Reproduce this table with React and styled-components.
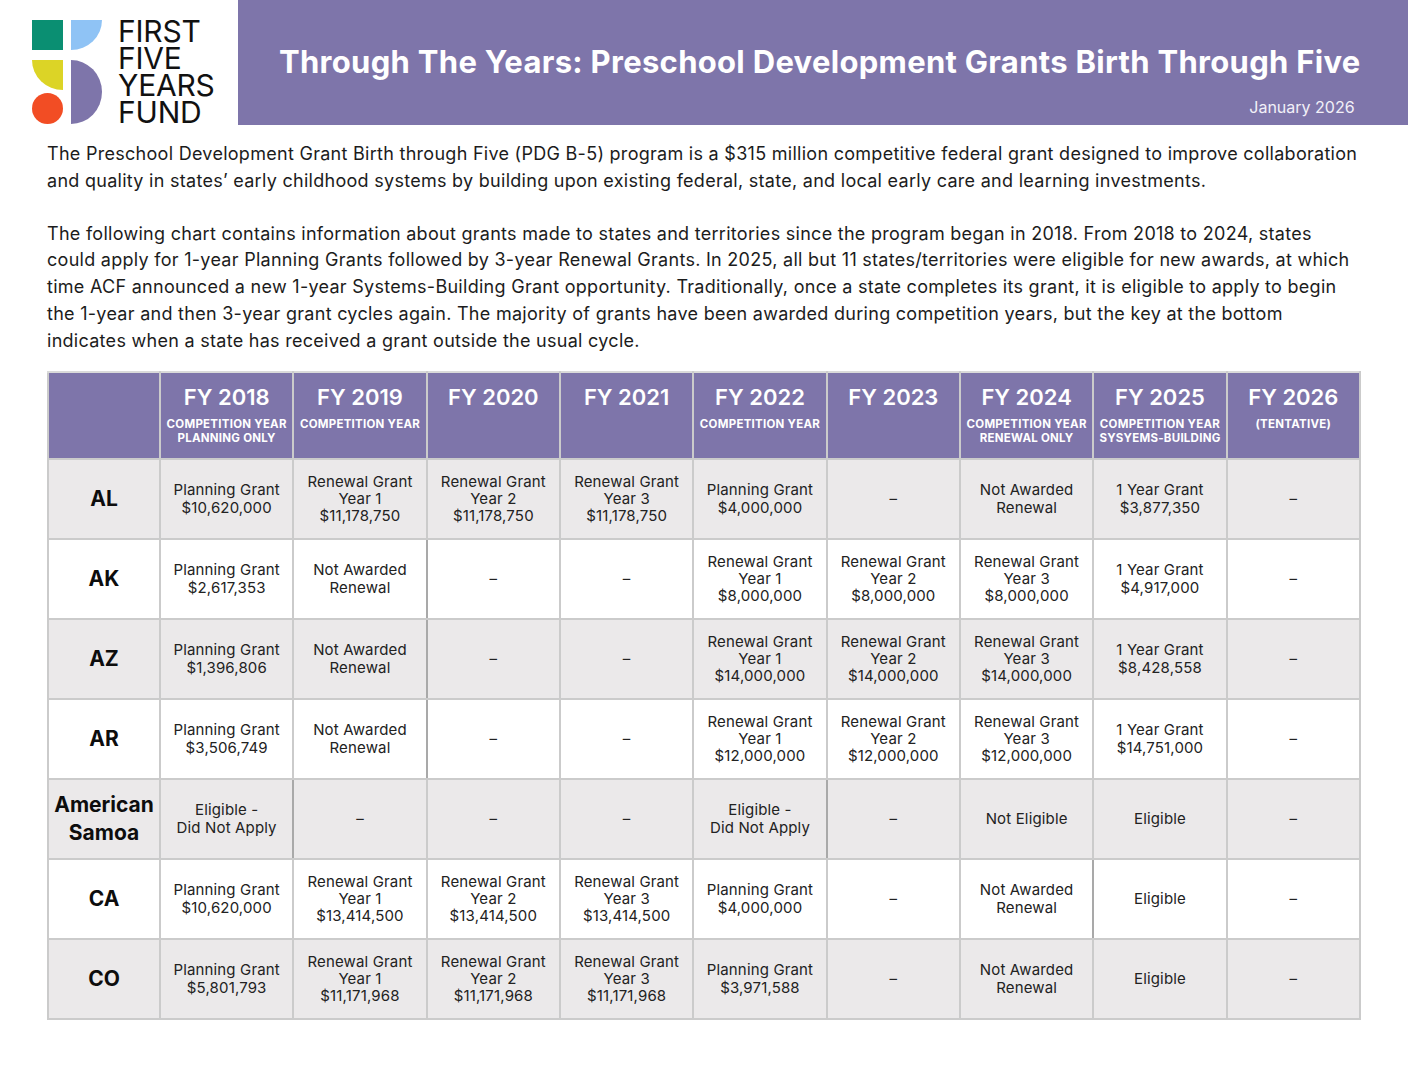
import styled, { createGlobalStyle } from "styled-components";

const PURPLE = "#7e75aa";
const GRID = "#cbcbcb";
const SHADE = "#ebe9ea";

const GlobalStyle = createGlobalStyle`
  body {
    margin: 0;
    background: #fff;
    font-family: "Inter", "Noto Sans", sans-serif;
    color: #1c1c1c;
  }
`;

const Page = styled.div`
  width: 1408px;
`;

const Header = styled.header`
  display: flex;
  height: 125px;
`;

const LogoBox = styled.div`
  width: 238px;
  flex-shrink: 0;
  display: flex;
  align-items: flex-start;
  gap: 16px;
  padding: 19px 0 0 32px;
  box-sizing: border-box;
`;

const LogoText = styled.div`
  font-size: 30px;
  line-height: 27px;
  font-weight: 400;
  letter-spacing: -0.2px;
  color: #111;
  margin-top: -1px;
`;

const Banner = styled.div`
  flex: 1;
  background: ${PURPLE};
  color: #fff;
  display: flex;
  flex-direction: column;
  padding: 41px 49px 0 41px;
  box-sizing: border-box;
`;

const Title = styled.h1`
  margin: 0;
  font-size: 31px;
  line-height: 42px;
  font-weight: 700;
  letter-spacing: 0.3px;
  white-space: nowrap;
`;

const DateLine = styled.div`
  align-self: flex-end;
  font-size: 16px;
  margin: 14px 6px 0 0;
  color: #f2f0f8;
`;

const Intro = styled.section`
  padding: 16px 47px 0 47px;
`;

const Para = styled.p`
  margin: 0 0 26px 0;
  font-size: 18px;
  line-height: 26.8px;
  letter-spacing: 0.28px;

  &:last-child {
    margin-bottom: 0;
  }
`;

const Table = styled.table`
  margin: 16px 0 0 47px;
  width: 1314px;
  border-collapse: collapse;
  table-layout: fixed;
`;

const HeadCell = styled.th`
  background: ${PURPLE};
  color: #fff;
  border: 2px solid ${GRID};
  border-top-color: #dadada;
  height: 87px;
  padding: 10px 2px 0;
  vertical-align: top;
  text-align: center;
  box-sizing: border-box;
`;

const Year = styled.div`
  font-size: 22px;
  line-height: 28px;
  font-weight: 600;
  letter-spacing: 0;
`;

const Note = styled.div`
  margin-top: 6px;
  font-size: 11.5px;
  line-height: 14px;
  font-weight: 700;
  letter-spacing: 0.25px;
  white-space: nowrap;
`;

const Row = styled.tr`
  background: ${(p) => (p.$shaded ? SHADE : "#fff")};
`;

const StateCell = styled.th`
  border: 2px solid ${GRID};
  height: 80px;
  padding: 0 4px;
  font-size: 21px;
  line-height: 28px;
  font-weight: 700;
  color: #0d0d0d;
  text-align: center;
  box-sizing: border-box;
`;

const Cell = styled.td`
  border: 2px solid ${GRID};
  border-right-color: ${(p) => (p.$edge ? "#a9a9a9" : GRID)};
  height: 80px;
  padding: 0 4px;
  font-size: 15px;
  line-height: 17.3px;
  letter-spacing: 0.15px;
  color: #222;
  text-align: center;
  vertical-align: middle;
  box-sizing: border-box;
`;

const heads = [
  ["FY 2018", ["COMPETITION YEAR", "PLANNING ONLY"]],
  ["FY 2019", ["COMPETITION YEAR"]],
  ["FY 2020", []],
  ["FY 2021", []],
  ["FY 2022", ["COMPETITION YEAR"]],
  ["FY 2023", []],
  ["FY 2024", ["COMPETITION YEAR", "RENEWAL ONLY"]],
  ["FY 2025", ["COMPETITION YEAR", "SYSYEMS-BUILDING"]],
  ["FY 2026", ["(TENTATIVE)"]],
];

const D = ["–"];
const plan = (v) => ["Planning Grant", v];
const renew = (y, v) => ["Renewal Grant", "Year " + y, v];
const oneYear = (v) => ["1 Year Grant", v];
const notAwarded = ["Not Awarded", "Renewal"];
const didNotApply = ["Eligible -", "Did Not Apply"];

const rows = [
  {
    state: ["AL"],
    cells: [plan("$10,620,000"), renew(1, "$11,178,750"), renew(2, "$11,178,750"), renew(3, "$11,178,750"), plan("$4,000,000"), D, notAwarded, oneYear("$3,877,350"), D],
  },
  {
    state: ["AK"],
    cells: [plan("$2,617,353"), notAwarded, D, D, renew(1, "$8,000,000"), renew(2, "$8,000,000"), renew(3, "$8,000,000"), oneYear("$4,917,000"), D],
    edges: [1],
  },
  {
    state: ["AZ"],
    cells: [plan("$1,396,806"), notAwarded, D, D, renew(1, "$14,000,000"), renew(2, "$14,000,000"), renew(3, "$14,000,000"), oneYear("$8,428,558"), D],
    edges: [1],
  },
  {
    state: ["AR"],
    cells: [plan("$3,506,749"), notAwarded, D, D, renew(1, "$12,000,000"), renew(2, "$12,000,000"), renew(3, "$12,000,000"), oneYear("$14,751,000"), D],
    edges: [1],
  },
  {
    state: ["American", "Samoa"],
    cells: [didNotApply, D, D, D, didNotApply, D, ["Not Eligible"], ["Eligible"], D],
    edges: [0, 4],
  },
  {
    state: ["CA"],
    cells: [plan("$10,620,000"), renew(1, "$13,414,500"), renew(2, "$13,414,500"), renew(3, "$13,414,500"), plan("$4,000,000"), D, notAwarded, ["Eligible"], D],
    edges: [6],
  },
  {
    state: ["CO"],
    cells: [plan("$5,801,793"), renew(1, "$11,171,968"), renew(2, "$11,171,968"), renew(3, "$11,171,968"), plan("$3,971,588"), D, notAwarded, ["Eligible"], D],
  },
];

function Lines({ items }) {
  return items.map((t, i) => <div key={i}>{t}</div>);
}

function LogoMark() {
  return (
    <svg width="70" height="106" viewBox="0 0 70 106">
      <rect x="0" y="1" width="31" height="30" fill="#0a8f72" />
      <path d="M39 1 H70 A31 30 0 0 1 39 31 Z" fill="#8fc3f5" />
      <path d="M0 41 H31 V71 A31 30 0 0 1 0 41 Z" fill="#dcd426" />
      <circle cx="15.5" cy="89.5" r="15.5" fill="#f24d24" />
      <path d="M39 41 A31 32 0 0 1 39 105 Z" fill="#7e75aa" />
    </svg>
  );
}

export default function App() {
  return (
    <Page>
      <GlobalStyle />
      <Header>
        <LogoBox>
          <LogoMark />
          <LogoText>
            FIRST
            <br />
            FIVE
            <br />
            YEARS
            <br />
            FUND
          </LogoText>
        </LogoBox>
        <Banner>
          <Title>Through The Years: Preschool Development Grants Birth Through Five</Title>
          <DateLine>January 2026</DateLine>
        </Banner>
      </Header>

      <Intro>
        <Para>
          The Preschool Development Grant Birth through Five (PDG B-5) program is a $315 million competitive federal grant designed to improve collaboration and quality in states’ early childhood systems by building upon existing federal, state, and local early care and learning investments.
        </Para>
        <Para>
          The following chart contains information about grants made to states and territories since the program began in 2018. From 2018 to 2024, states could apply for 1-year Planning Grants followed by 3-year Renewal Grants. In 2025, all but 11 states/territories were eligible for new awards, at which time ACF announced a new 1-year Systems-Building Grant opportunity. Traditionally, once a state completes its grant, it is eligible to apply to begin the 1-year and then 3-year grant cycles again. The majority of grants have been awarded during competition years, but the key at the bottom indicates when a state has received a grant outside the usual cycle.
        </Para>
      </Intro>

      <Table>
        <colgroup>
          <col style={{ width: 112 }} />
          {heads.map((h) => (
            <col key={h[0]} />
          ))}
        </colgroup>
        <thead>
          <tr>
            <HeadCell />
            {heads.map(([year, notes]) => (
              <HeadCell key={year}>
                <Year>{year}</Year>
                {notes.length > 0 && (
                  <Note>
                    <Lines items={notes} />
                  </Note>
                )}
              </HeadCell>
            ))}
          </tr>
        </thead>
        <tbody>
          {rows.map((r, i) => (
            <Row key={r.state.join(" ")} $shaded={i % 2 === 0}>
              <StateCell>
                <Lines items={r.state} />
              </StateCell>
              {r.cells.map((c, j) => (
                <Cell key={j} $edge={(r.edges || []).includes(j)}>
                  <Lines items={c} />
                </Cell>
              ))}
            </Row>
          ))}
        </tbody>
      </Table>
    </Page>
  );
}
